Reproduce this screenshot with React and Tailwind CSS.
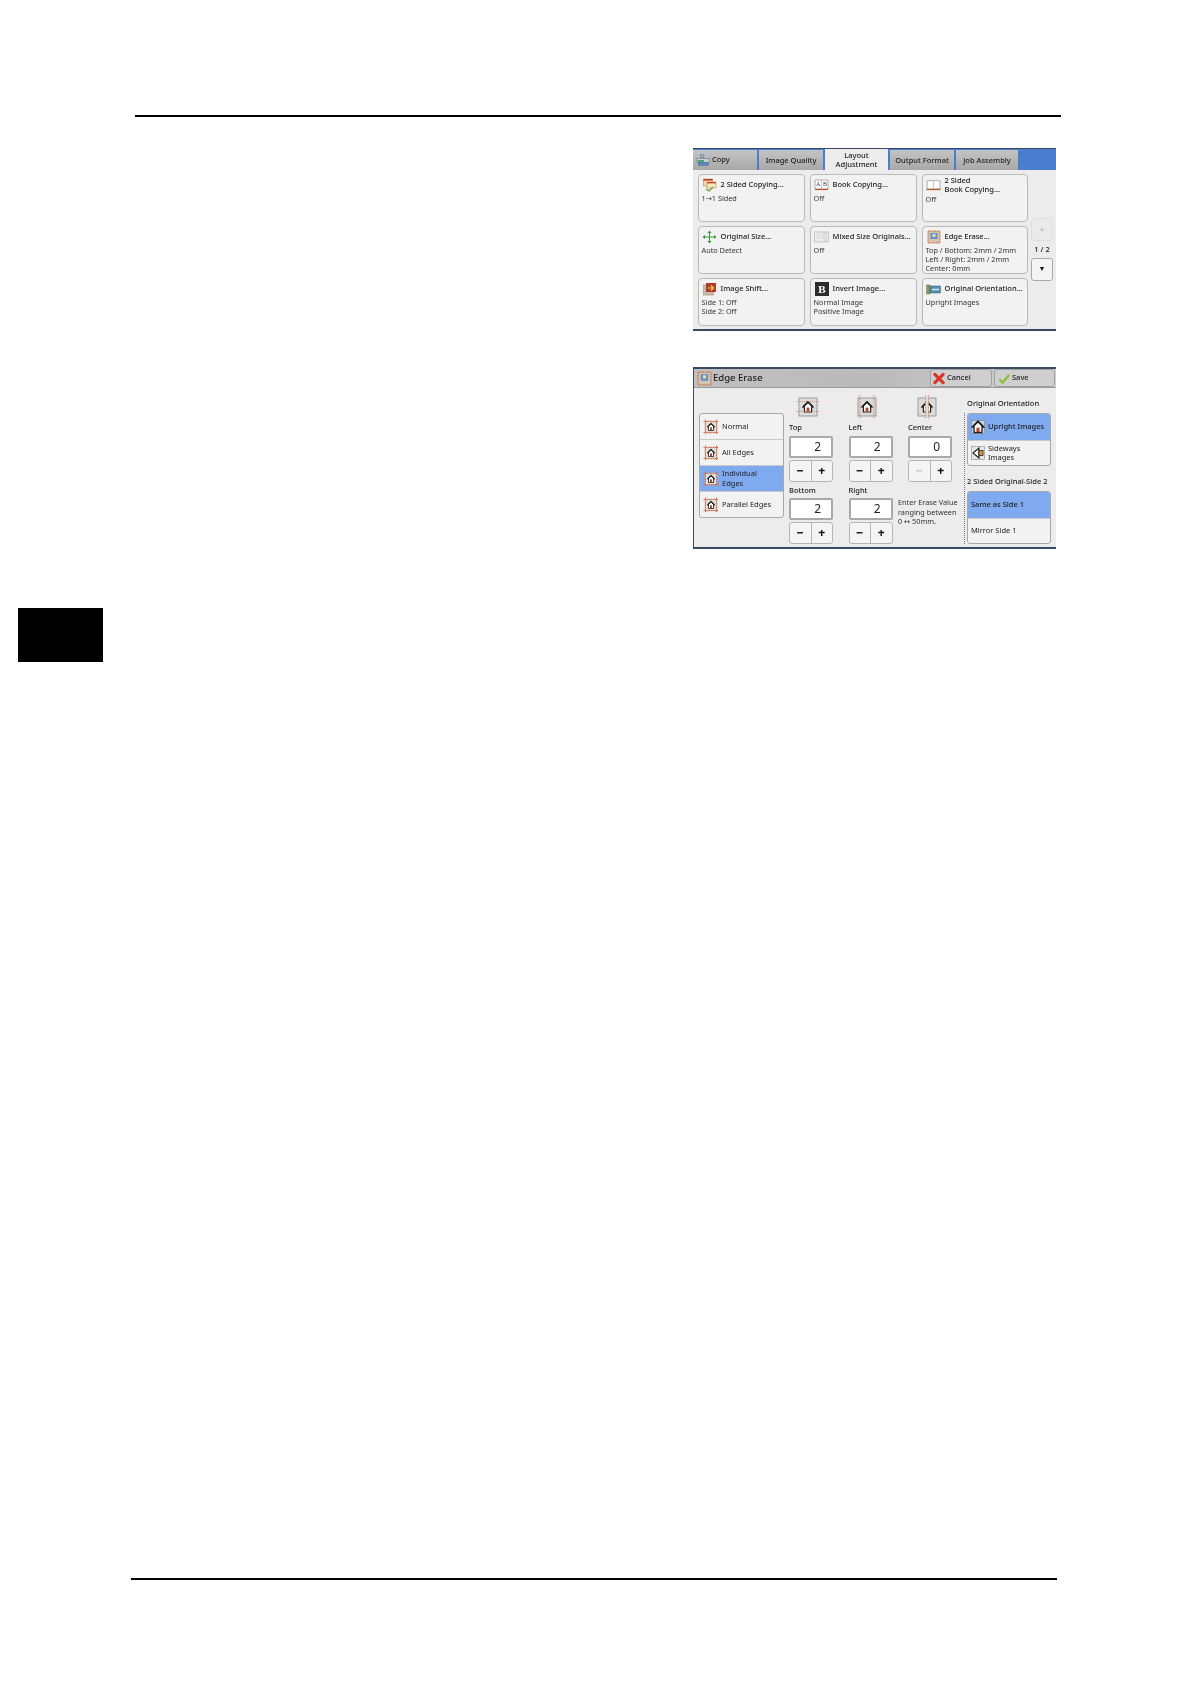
const tabs = [
  { label: 'Image Quality', w: 'w-[64px]' },
  { label: 'Layout\nAdjustment', w: 'w-[63px]', active: true },
  { label: 'Output Format', w: 'w-[64px]' },
  { label: 'Job Assembly', w: 'w-[62px]' },
];

const House = ({ x = 0, y = 0, s = 1 }) => (
  <g transform={`translate(${x} ${y}) scale(${s})`}>
    <path d="M0 5 L5 0 L10 5 L8.6 5 L8.6 10 L1.4 10 L1.4 5 Z" fill="#fff" stroke="#222" strokeWidth="1.2" />
    <rect x="3.6" y="5.6" width="2.8" height="4" fill="#b5462c" />
    <path d="M0 5 L5 0 L10 5" fill="none" stroke="#1c1c1c" strokeWidth="1.6" />
  </g>
);

const CopyIcon = () => (
  <svg width="14" height="14" viewBox="0 0 16 14">
    <rect x="5" y="1" width="4" height="3" fill="#a8b4c0" stroke="#5c6a78" strokeWidth="0.6" />
    <rect x="1" y="5" width="14" height="5" fill="#c3ced8" stroke="#5c6a78" strokeWidth="0.6" />
    <rect x="2" y="7" width="7" height="2" fill="#3fa060" />
    <rect x="3" y="10" width="11" height="3" fill="#4a8fc8" stroke="#446" strokeWidth="0.4" />
  </svg>
);

const TwoSidedIcon = () => (
  <svg width="14" height="14" viewBox="0 0 14 14">
    <rect x="0.5" y="1" width="9" height="7" fill="#f4d9a0" stroke="#a67a3a" strokeWidth="0.5" />
    <rect x="0.5" y="1" width="9" height="1.6" fill="#c23a32" />
    <rect x="4" y="4" width="9" height="6" fill="#f7e7b8" stroke="#b08a40" strokeWidth="0.5" />
    <rect x="4" y="4" width="9" height="1.4" fill="#c8443a" />
    <path d="M3 11 L6 13 L10 9" fill="none" stroke="#6f9a34" strokeWidth="1.3" />
  </svg>
);

const AbBookIcon = () => (
  <svg width="15" height="14" viewBox="0 0 15 14">
    <path d="M1 2 H14 V11 H1 Z" fill="#fdfdfd" stroke="#8a7a6a" strokeWidth="0.6" />
    <path d="M7.5 2 V11" stroke="#999" strokeWidth="0.5" />
    <text x="2" y="8" fontSize="6" fill="#3a3a5a" fontFamily="'Liberation Serif', serif">A</text>
    <text x="9" y="8" fontSize="6" fill="#3a3a5a" fontFamily="'Liberation Serif', serif">B</text>
    <path d="M1 11.5 H14" stroke="#c0512c" strokeWidth="1.2" />
  </svg>
);

const OpenBookIcon = () => (
  <svg width="15" height="14" viewBox="0 0 15 14">
    <path d="M1 3 Q4.5 1.5 7.5 3 Q10.5 1.5 14 3 V11 H1 Z" fill="#fff" stroke="#7a7a7a" strokeWidth="0.6" />
    <path d="M7.5 3 V11" stroke="#999" strokeWidth="0.5" />
    <path d="M0.5 11.5 H14.5" stroke="#b65a2a" strokeWidth="1.3" />
  </svg>
);

const SizeIcon = () => (
  <svg width="15" height="14" viewBox="0 0 15 14">
    <path d="M7.5 1 V13 M1 7 H14" stroke="#3a9a3a" strokeWidth="1" />
    <path d="M5.5 3 L7.5 0.8 L9.5 3 Z M5.5 11 L7.5 13.2 L9.5 11 Z M3 5 L0.8 7 L3 9 Z M12 5 L14.2 7 L12 9 Z" fill="#2f8f3a" />
  </svg>
);

const MixedIcon = () => (
  <svg width="15" height="14" viewBox="0 0 15 14">
    <rect x="0.5" y="2" width="14" height="10" fill="#eee" stroke="#aaa" strokeWidth="0.6" />
    <path d="M10 2 V12 M12 2 V12" stroke="#bbb" strokeWidth="0.6" />
    <path d="M2 4 H9 M2 6 H9 M2 8 H9" stroke="#ccc" strokeWidth="0.6" />
  </svg>
);

const EdgeIcon = ({ size = 14 }) => (
  <svg width={size} height={size} viewBox="0 0 14 14">
    <rect x="1" y="1" width="12" height="12" fill="#d6c3ac" stroke="#c4562e" strokeWidth="0.9" strokeDasharray="1.4 0.8" />
    <rect x="3.5" y="3" width="7" height="6" fill="#5b8fd0" />
    <rect x="5.5" y="4" width="3" height="3" fill="#e8e0a0" />
  </svg>
);

const ShiftIcon = () => (
  <svg width="14" height="14" viewBox="0 0 14 14">
    <rect x="0.5" y="3" width="10" height="10" fill="#c9b9a8" stroke="#8a7a6a" strokeWidth="0.5" />
    <rect x="3" y="1" width="10" height="9" fill="#b23c2c" />
    <path d="M5 6 H10 M8 3.5 L10.5 6 L8 8.5" fill="none" stroke="#f0d050" strokeWidth="1.1" />
  </svg>
);

const InvertIcon = () => (
  <svg width="14" height="14" viewBox="0 0 14 14">
    <rect width="14" height="14" fill="#2b2b2b" />
    <text x="7" y="11" textAnchor="middle" fontSize="11" fontWeight="700" fill="#fff" fontFamily="'Liberation Serif', serif">B</text>
  </svg>
);

const OrientIcon = () => (
  <svg width="15" height="14" viewBox="0 0 15 14">
    <rect x="0.5" y="3" width="3.5" height="9" fill="#8a9a5a" stroke="#5a6a4a" strokeWidth="0.4" />
    <rect x="4" y="4" width="10.5" height="7" fill="#4f8fb0" stroke="#3a5a6a" strokeWidth="0.5" />
    <path d="M6 7.5 H13" stroke="#dff0e8" strokeWidth="1.4" />
  </svg>
);

const CancelIcon = () => (
  <svg width="12" height="13" viewBox="0 0 13 13">
    <path d="M2 2 L11 11 M11 2 L2 11" stroke="#d8362a" strokeWidth="3.4" strokeLinecap="round" />
  </svg>
);

const SaveIcon = () => (
  <svg width="12" height="13" viewBox="0 0 13 13">
    <path d="M1.5 7.5 L5 11 L12 2.5" fill="none" stroke="#8cc03c" strokeWidth="2.6" />
  </svg>
);

const ModeIcon = () => (
  <svg width="16" height="16" viewBox="0 0 16 16">
    <rect x="2" y="2" width="12" height="12" fill="#e2dcd6" stroke="#999" strokeWidth="0.4" />
    <path d="M0.5 2.5 H15.5 M0.5 13.5 H15.5 M2.5 0.5 V15.5 M13.5 0.5 V15.5" stroke="#d8643a" strokeWidth="1" strokeDasharray="1.2 0.7" />
    <House x={4.5} y={4.5} s={0.7} />
  </svg>
);

const EraseIcon = ({ variant }) => (
  <svg width="24" height="24" viewBox="0 0 24 24">
    <rect x="3" y="3" width="18" height="18" fill="#dcdcdc" stroke="#8a8a8a" strokeWidth="0.8" />
    {variant === 'center' ? (
      <g>
        <House x={7} y={7} s={1} />
        <rect x="10.4" y="1" width="3.2" height="22" fill="#dcdcdc" />
      </g>
    ) : (
      <House x={7} y={7} s={1} />
    )}
    {variant === 'top' && <path d="M0 16.5 H24 M0 6.5 H24" stroke="#e0693f" strokeWidth="0.7" strokeDasharray="1.2 0.8" opacity="0.9" />}
    {variant === 'left' && <path d="M5 0 V24 M19 0 V24" stroke="#e0693f" strokeWidth="0.8" strokeDasharray="1.2 0.8" />}
    {variant === 'center' && <path d="M10.4 0 V24 M13.6 0 V24" stroke="#e0693f" strokeWidth="0.8" strokeDasharray="1.2 0.8" />}
  </svg>
);

const UprightIcon = () => (
  <svg width="14" height="14" viewBox="0 0 14 14">
    <rect x="0.5" y="0.5" width="13" height="13" fill="#c9d3de" stroke="#777" strokeWidth="0.5" />
    <House x={1.5} y={1.5} s={1.1} />
  </svg>
);

const SidewaysIcon = () => (
  <svg width="14" height="14" viewBox="0 0 14 14">
    <rect x="0.5" y="0.5" width="13" height="13" fill="#e8e8e8" stroke="#777" strokeWidth="0.5" />
    <path d="M2 7 L8 2 V12 Z" fill="#fff" stroke="#222" strokeWidth="1.2" />
    <rect x="8" y="4.5" width="4" height="5" fill="#d89a3a" stroke="#222" strokeWidth="0.8" />
  </svg>
);

const Arrow = ({ children }) => <span className="font-['DejaVu_Sans',sans-serif]">{children}</span>;

const features = [
  { icon: <TwoSidedIcon />, title: ['2 Sided Copying...'], lines: [<>1<Arrow>→</Arrow>1 Sided</>] },
  { icon: <AbBookIcon />, title: ['Book Copying...'], lines: ['Off'] },
  { icon: <OpenBookIcon />, title: ['2 Sided', 'Book Copying...'], lines: ['Off'], tall: true },
  { icon: <SizeIcon />, title: ['Original Size...'], lines: ['Auto Detect'] },
  { icon: <MixedIcon />, title: ['Mixed Size Originals...'], lines: ['Off'] },
  { icon: <EdgeIcon />, title: ['Edge Erase...'], lines: ['Top / Bottom: 2mm / 2mm', 'Left / Right: 2mm / 2mm', 'Center: 0mm'] },
  { icon: <ShiftIcon />, title: ['Image Shift...'], lines: ['Side 1: Off', 'Side 2: Off'] },
  { icon: <InvertIcon />, title: ['Invert Image...'], lines: ['Normal Image', 'Positive Image'] },
  { icon: <OrientIcon />, title: ['Original Orientation...'], lines: ['Upright Images'] },
];

const modes = [
  { label: ['Normal'] },
  { label: ['All Edges'] },
  { label: ['Individual', 'Edges'], active: true },
  { label: ['Parallel Edges'] },
];

function FeatureButton({ item }) {
  return (
    <div className="flex h-[48px] flex-col rounded-[4px] border border-[#b9b9b9] bg-[#f2f2f2] px-[2.5px]">
      <div className={`flex items-center gap-[3px] ${item.tall ? 'h-[19px]' : 'h-[18px] pt-[1px]'}`}>
        <span className="flex w-[16px] shrink-0 justify-center">{item.icon}</span>
        <div className="text-[7.5px] font-medium leading-[9px] whitespace-nowrap text-[#222]">
          {item.title.map((t) => <div key={t}>{t}</div>)}
        </div>
      </div>
      <div className="mt-[1px] text-[7.3px] leading-[9px] whitespace-nowrap text-[#333]">
        {item.lines.map((l, i) => <div key={i}>{l}</div>)}
      </div>
    </div>
  );
}

function Stepper({ disabled }) {
  return (
    <div className="flex h-[22px] w-[44px] rounded-[3px] border border-[#b5b5b5] bg-[#f4f4f4] text-[#111]">
      <span className={`flex flex-1 items-center justify-center border-r border-[#b5b5b5] text-[12px] font-extrabold ${disabled ? 'text-[#c8c8c8]' : ''}`}>−</span>
      <span className="flex flex-1 items-center justify-center text-[12px] font-extrabold">+</span>
    </div>
  );
}

function Field({ label, value, disabled, labelClass }) {
  return (
    <div className="flex w-[44px] flex-col">
      <div className={`flex items-end text-[7.5px] font-medium text-[#222] ${labelClass}`}>{label}</div>
      <div className="flex h-[22px] items-center justify-end rounded-[2px] border-2 border-[#a9a9a9] bg-white pr-[10px] text-[12px] text-[#222]">{value}</div>
      <div className="mt-[2px]"><Stepper disabled={disabled} /></div>
    </div>
  );
}

function OptionGroup({ top, bottom }) {
  return (
    <div className="flex h-[53px] w-[84px] flex-col overflow-hidden rounded-[3px] border border-[#a8a8a8] bg-[#f2f2f2] text-[7.5px] leading-[9.5px] text-[#222]">
      <div className="flex h-[26px] items-center gap-[3px] bg-[#7faaf0] px-[3px] font-medium">{top}</div>
      <div className="flex flex-1 items-center gap-[3px] border-t border-[#c8c8c8] px-[3px]">{bottom}</div>
    </div>
  );
}

function CopyScreen() {
  return (
    <div className="flex h-[183px] w-[363px] flex-col overflow-hidden border-t border-b-2 border-[#3a4a60] bg-[#ececec] blur-[0.4px]">
      <div className="flex h-[21px] shrink-0 items-end gap-[2px] bg-[#4a7dd0]">
        <div className="flex h-[20px] w-[64px] items-center gap-[2px] bg-gradient-to-b from-[#c4c4c4] to-[#a8a8a8] px-[3px] text-[7.5px] font-medium text-[#222]">
          <CopyIcon />
          <span>Copy</span>
        </div>
        {tabs.map((t) => (
          <div
            key={t.label}
            className={`flex items-center justify-center text-center text-[7.5px] font-medium leading-[9px] whitespace-pre text-[#222] ${t.w} ${t.active ? 'h-[21px] bg-[#ececec]' : 'h-[20px] bg-gradient-to-b from-[#c4c4c4] to-[#a8a8a8]'}`}
          >
            {t.label}
          </div>
        ))}
      </div>
      <div className="flex pt-[4px] pl-[5px]">
        <div className="grid grid-cols-[107px_107px_106px] gap-x-[5px] gap-y-[4px]">
          {features.map((f) => <FeatureButton key={f.title.join()} item={f} />)}
        </div>
        <div className="ml-[3px] flex w-[22px] flex-col pt-[44px] text-[#111]">
          <div className="flex h-[23px] items-center justify-center rounded-[3px] border border-[#dedede] bg-[#eaeaea] text-[7px] text-[#c8c8c8]">▲</div>
          <div className="flex h-[17px] items-center justify-center text-[7.5px] font-medium">1 / 2</div>
          <div className="flex h-[23px] items-center justify-center rounded-[3px] border border-[#a8a8a8] bg-[#f4f4f4] text-[7px]">▼</div>
        </div>
      </div>
    </div>
  );
}

function EraseScreen() {
  return (
    <div className="flex h-[182px] w-[363px] flex-col overflow-hidden border-t-2 border-b-2 border-l border-[#3a4a60] bg-[#ececec] blur-[0.4px]">
      <div className="flex h-[19px] shrink-0 items-center border-b border-[#9a9a9a] bg-gradient-to-r from-[#c0c0c0] via-[#bababa] to-[#d2d2d2] pr-[1px] pl-[3px]">
        <EdgeIcon size={15} />
        <span className="ml-[1px] text-[9.5px] font-medium text-[#222]">Edge Erase</span>
        <div className="ml-auto flex gap-[2px]">
          <div className="flex h-[18px] w-[62px] items-center gap-[2px] rounded-[3px] border border-[#a0a0a0] bg-[#cfcfcf] px-[2px] text-[7.5px] font-medium text-[#222]">
            <CancelIcon />
            <span>Cancel</span>
          </div>
          <div className="flex h-[18px] w-[61px] items-center gap-[2px] rounded-[3px] border border-[#a0a0a0] bg-[#cfcfcf] px-[3px] text-[7.5px] font-medium text-[#222]">
            <SaveIcon />
            <span>Save</span>
          </div>
        </div>
      </div>

      <div className="flex pl-[5px]">
        <div className="mt-[25px] flex h-[105px] w-[85px] shrink-0 flex-col overflow-hidden rounded-[3px] border border-[#a8a8a8] bg-[#f2f2f2]">
          {modes.map((m) => (
            <div
              key={m.label[0]}
              className={`flex flex-1 items-center gap-[3px] border-b border-[#c8c8c8] px-[3px] text-[7.5px] leading-[9.5px] text-[#222] last:border-b-0 ${m.active ? 'bg-[#7faaf0]' : ''}`}
            >
              <ModeIcon />
              <div>{m.label.map((l) => <div key={l}>{l}</div>)}</div>
            </div>
          ))}
        </div>

        <div className="ml-[5px] flex shrink-0 gap-[15.5px]">
          <div className="flex flex-col">
            <div className="flex h-[31px] items-end justify-center pr-[7px]"><EraseIcon variant="top" /></div>
            <Field label="Top" value="2" labelClass="h-[17px] pb-[3px]" />
            <Field label="Bottom" value="2" labelClass="h-[16px] pb-[2px]" />
          </div>
          <div className="flex flex-col">
            <div className="flex h-[31px] items-end justify-center pr-[7px]"><EraseIcon variant="left" /></div>
            <Field label="Left" value="2" labelClass="h-[17px] pb-[3px]" />
            <Field label="Right" value="2" labelClass="h-[16px] pb-[2px]" />
          </div>
          <div className="flex w-[44px] flex-col">
            <div className="flex h-[31px] items-end justify-center pr-[7px]"><EraseIcon variant="center" /></div>
            <Field label="Center" value="0" disabled labelClass="h-[17px] pb-[3px]" />
            <div className="mt-[16px] -mr-[20px] -ml-[10px] text-[7.3px] leading-[9.5px] whitespace-pre text-[#333]">
              {'Enter Erase Value\nranging between\n0 '}<Arrow>↔</Arrow>{' 50mm.'}
            </div>
          </div>
        </div>

        <div className="ml-[12px] flex shrink-0 flex-col">
          <div className="flex h-[25px] items-end pb-[4px] pl-[3px] text-[7.5px] font-medium whitespace-nowrap text-[#222]">Original Orientation</div>
          <div className="flex h-[131px] flex-col border-l border-dotted border-[#777] pl-[2px]">
            <OptionGroup
              top={<><UprightIcon /><span>Upright Images</span></>}
              bottom={<><SidewaysIcon /><span>Sideways<br />Images</span></>}
            />
            <div className="flex h-[25px] items-end pb-[4px] text-[7.5px] font-medium whitespace-nowrap text-[#222]">2 Sided Original-Side 2</div>
            <OptionGroup top={<span>Same as Side 1</span>} bottom={<span>Mirror Side 1</span>} />
          </div>
        </div>
      </div>
    </div>
  );
}

export default function App() {
  return (
    <div className="h-[1684px] w-[1190px] overflow-hidden bg-white font-['Noto_Sans',sans-serif]">
      <div className="mt-[115px] ml-[135px] h-[1.5px] w-[926px] bg-black" />
      <div className="mt-[31.5px] ml-[693px]"><CopyScreen /></div>
      <div className="mt-[36px] ml-[693px]"><EraseScreen /></div>
      <div className="mt-[59px] ml-[18px] h-[54px] w-[85px] bg-black" />
      <div className="mt-[916px] ml-[131px] h-[1.5px] w-[926px] bg-black" />
    </div>
  );
}
